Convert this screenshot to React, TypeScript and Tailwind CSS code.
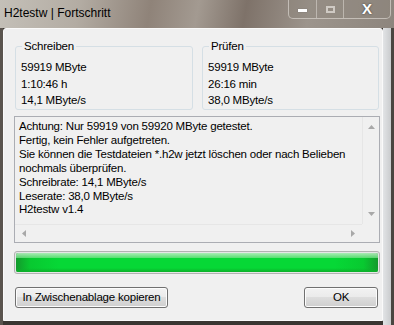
const font = { fontFamily: '"Liberation Sans", Arial, sans-serif' };

const GroupBox = ({ title, lines, className }: { title: string; lines: string[]; className?: string }) => (
  <div className={`relative h-[64px] rounded-[3px] border border-[#d5dfe5] ${className ?? ''}`}>
    <span className="absolute left-[6px] top-[-8px] bg-[#f0f0f0] px-[2px] text-[11.5px] leading-[14px] tracking-[-0.2px] text-black">
      {title}
    </span>
    <div className="flex flex-col pl-[5px] pt-[12px] text-[11.5px] leading-[16.5px] tracking-[-0.2px] text-black">
      {lines.map((l) => (
        <div key={l} className="whitespace-nowrap">{l}</div>
      ))}
    </div>
  </div>
);

const Arrow = ({ dir }: { dir: 'up' | 'down' | 'left' | 'right' }) => {
  const pts = {
    up: '0,4 3.5,0 7,4',
    down: '0,0 3.5,4 7,0',
    left: '4,0 0,3.5 4,7',
    right: '0,0 4,3.5 0,7',
  }[dir];
  const vertical = dir === 'up' || dir === 'down';
  return (
    <svg width={vertical ? 7 : 4} height={vertical ? 4 : 7} viewBox={vertical ? '0 0 7 4' : '0 0 4 7'}>
      <polygon points={pts} fill="#a8a8a8" />
    </svg>
  );
};

const Button = ({ children, className }: { children: string; className?: string }) => (
  <button
    className={`h-[21px] rounded-[3px] border border-[#707070] bg-[linear-gradient(#f2f2f2_0%,#ebebeb_45%,#dddddd_50%,#cfcfcf_100%)] text-[11.5px] leading-[19px] tracking-[-0.2px] text-black shadow-[inset_0_0_0_1px_#fcfcfc] ${className ?? ''}`}
  >
    {children}
  </button>
);

export default function App() {
  const log = [
    'Achtung: Nur 59919 von 59920 MByte getestet.',
    'Fertig, kein Fehler aufgetreten.',
    'Sie können die Testdateien *.h2w jetzt löschen oder nach Belieben',
    'nochmals überprüfen.',
    'Schreibrate: 14,1 MByte/s',
    'Leserate: 38,0 MByte/s',
    'H2testw v1.4',
  ];

  return (
    <div className="flex h-[325px] w-[394px] flex-col overflow-hidden bg-[#3a3632]" style={font}>
      {/* Titelleiste */}
      <div className="flex h-[28px] shrink-0 items-start justify-between bg-[linear-gradient(100deg,#c4c0b8_0%,#b3aca3_20%,#8f8379_38%,#a39a91_50%,#7e7269_62%,#9c948c_78%,#8d857d_100%)]">
        <span className="pl-[4px] pt-[6px] text-[12px] leading-[14px] text-black">H2testw | Fortschritt</span>
        <div className="mr-[3px] flex h-[19px] overflow-hidden rounded-b-[5px] border border-t-0 border-[#e6e2dc]/60 bg-[#8d847b]/40">
          <div className="flex w-[28px] items-center justify-center border-r border-[#e6e2dc]/50">
            <div className="mt-[3px] h-[3px] w-[9px] bg-white shadow-[0_0_1px_#555]" />
          </div>
          <div className="flex w-[27px] items-center justify-center border-r border-[#e6e2dc]/50">
            <div className="h-[7px] w-[9px] border-[2px] border-[#cfcac4]" />
          </div>
          <div className="flex w-[46px] items-center justify-center">
            <span className="text-[15px] font-bold leading-[14px] text-white [text-shadow:0_0_2px_#333]">X</span>
          </div>
        </div>
      </div>

      <div className="flex min-h-0 flex-1">
        <div className="w-[3px] shrink-0 bg-[#5a544e]" />

        {/* Client-Bereich */}
        <div className="flex h-[293px] w-[380px] shrink-0 flex-col rounded-t-[3px] border border-[#fafafa] bg-[#f0f0f0] pl-[10px] pr-[3px]">
          <div className="mt-[17px] flex gap-[9px] pl-[1px]">
            <GroupBox className="w-[178px]" title="Schreiben" lines={['59919 MByte', '1:10:46 h', '14,1 MByte/s']} />
            <GroupBox className="w-[177px]" title="Prüfen" lines={['59919 MByte', '26:16 min', '38,0 MByte/s']} />
          </div>

          {/* Protokoll */}
          <div className="mt-[6px] flex h-[127px] w-[366px] flex-col border border-[#abadb3] bg-[#f0f0f0]">
            <div className="flex min-h-0 flex-1">
              <div className="flex-1 pl-[4px] pt-[3px] text-[11.5px] leading-[13.9px] tracking-[-0.2px] text-black">
                {log.map((l) => (
                  <div key={l} className="whitespace-nowrap">{l}</div>
                ))}
              </div>
              <div className="flex w-[17px] flex-col items-center justify-between border-l border-[#e6e6e6] py-[8px]">
                <Arrow dir="up" />
                <Arrow dir="down" />
              </div>
            </div>
            <div className="flex h-[18px] items-center">
              <div className="flex h-full flex-1 items-center justify-between border-t border-[#e6e6e6] px-[7px]">
                <Arrow dir="left" />
                <Arrow dir="right" />
              </div>
              <div className="h-full w-[17px] bg-[#f0f0f0]" />
            </div>
          </div>

          {/* Fortschrittsbalken */}
          <div className="mt-[8px] h-[23px] w-[366px] rounded-[3px] border border-[#b2b2b2] bg-[#e6e6e6] p-[1px]">
            <div className="relative h-full w-full overflow-hidden rounded-[2px] bg-[linear-gradient(90deg,#139a2c_0%,#08c930_4%,#06d836_12%,#06d836_88%,#08c930_96%,#139a2c_100%)]">
              <div className="absolute inset-x-0 top-0 h-[5px] bg-[linear-gradient(#d2f3d6,#6ae07e)] opacity-80" />
              <div className="absolute inset-x-0 bottom-0 h-[4px] bg-[linear-gradient(transparent,#0cb02a)]" />
            </div>
          </div>

          <div className="mt-[13px] flex justify-between pl-[1px] pr-[1px]">
            <Button className="w-[153px]">In Zwischenablage kopieren</Button>
            <Button className="w-[74px]">OK</Button>
          </div>
        </div>

        <div className="w-[8px] shrink-0 bg-[linear-gradient(90deg,#e2e4e6,#c9cbcd)]" />
        <div className="w-[3px] shrink-0 bg-[#4a4540]" />
      </div>
    </div>
  );
}
